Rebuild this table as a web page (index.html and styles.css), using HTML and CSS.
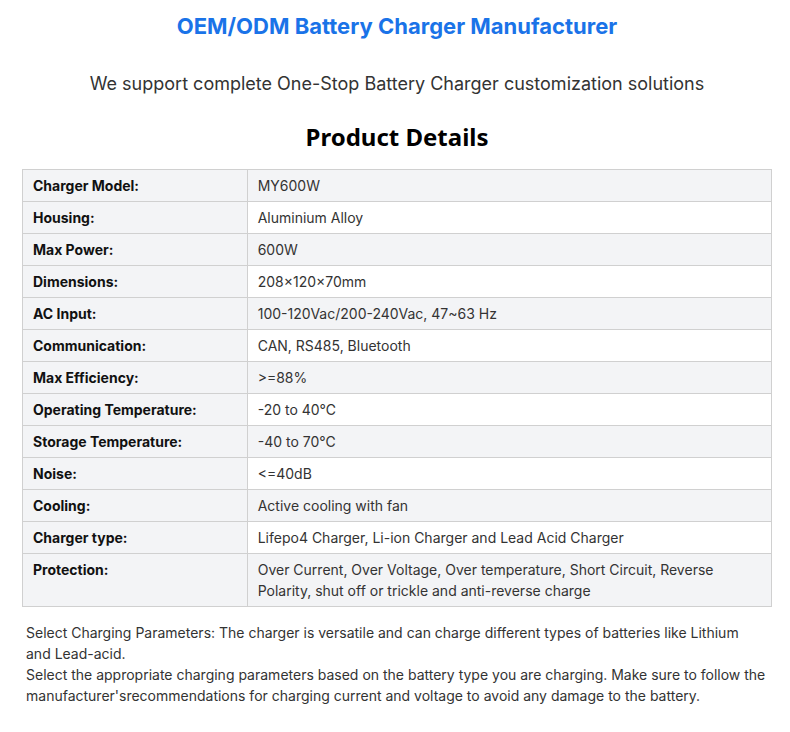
FILE: index.html
```html
<!DOCTYPE html>
<html lang="en">
<head>
<meta charset="utf-8">
<title>OEM/ODM Battery Charger Manufacturer</title>
<link rel="stylesheet" href="styles.css">
</head>
<body>
<div class="page">
  <h1 class="title">OEM/ODM Battery Charger Manufacturer</h1>
  <p class="subtitle">We support complete One-Stop Battery Charger customization solutions</p>
  <h2 class="section-title">Product Details</h2>
  <table class="specs">
    <tbody>
      <tr><th>Charger Model:</th><td>MY600W</td></tr>
      <tr><th>Housing:</th><td>Aluminium Alloy</td></tr>
      <tr><th>Max Power:</th><td>600W</td></tr>
      <tr><th>Dimensions:</th><td>208×120×70mm</td></tr>
      <tr><th>AC Input:</th><td>100-120Vac/200-240Vac, 47~63 Hz</td></tr>
      <tr><th>Communication:</th><td>CAN, RS485, Bluetooth</td></tr>
      <tr><th>Max Efficiency:</th><td>&gt;=88%</td></tr>
      <tr><th>Operating Temperature:</th><td>-20 to 40℃</td></tr>
      <tr><th>Storage Temperature:</th><td>-40 to 70℃</td></tr>
      <tr><th>Noise:</th><td>&lt;=40dB</td></tr>
      <tr><th>Cooling:</th><td>Active cooling with fan</td></tr>
      <tr><th>Charger type:</th><td>Lifepo4 Charger, Li-ion Charger and Lead Acid Charger</td></tr>
      <tr><th>Protection:</th><td>Over Current, Over Voltage, Over temperature, Short Circuit, Reverse Polarity, shut off or trickle and anti-reverse charge</td></tr>
    </tbody>
  </table>
  <div class="notes">
    <p>Select Charging Parameters: The charger is versatile and can charge different types of batteries like Lithium and Lead-acid.</p>
    <p>Select the appropriate charging parameters based on the battery type you are charging. Make sure to follow the manufacturer'srecommendations for charging current and voltage to avoid any damage to the battery.</p>
  </div>
</div>
</body>
</html>
```
FILE: styles.css
```css
html, body {
  margin: 0;
  padding: 0;
  background: #ffffff;
}
body {
  font-family: Inter, "Liberation Sans", sans-serif;
  color: #333333;
}
.page {
  width: 750px;
  margin: 0 18px 0 22px;
}
.title {
  margin: 11px 0 0;
  font-size: 22px;
  line-height: 30px;
  font-weight: 700;
  color: #1a73e8;
  text-align: center;
}
.subtitle {
  margin: 30px 0 0;
  font-size: 18px;
  line-height: 26px;
  color: #333333;
  text-align: center;
}
.section-title {
  margin: 23px 0 0;
  font-family: "Noto Sans", "Open Sans", sans-serif;
  font-size: 24px;
  line-height: 34px;
  font-weight: 700;
  color: #000000;
  text-align: center;
}
.specs {
  margin-top: 15px;
  width: 100%;
  border-collapse: collapse;
  font-size: 14px;
  line-height: 21px;
}
.specs th,
.specs td {
  border: 1px solid #d0d0d0;
  padding: 5px 10px;
  text-align: left;
  vertical-align: top;
}
.specs th {
  width: 30%;
  box-sizing: border-box;
  font-weight: 700;
  color: #111111;
  background: #f3f4f6;
}
.specs td {
  color: #333333;
  background: #ffffff;
}
.specs tr:nth-child(odd) td {
  background: #f3f4f6;
}
.notes {
  margin-top: 15px;
  padding: 0 5px 0 4px;
  font-size: 14px;
  line-height: 21px;
  color: #333333;
}
.notes p {
  margin: 0;
}
```
